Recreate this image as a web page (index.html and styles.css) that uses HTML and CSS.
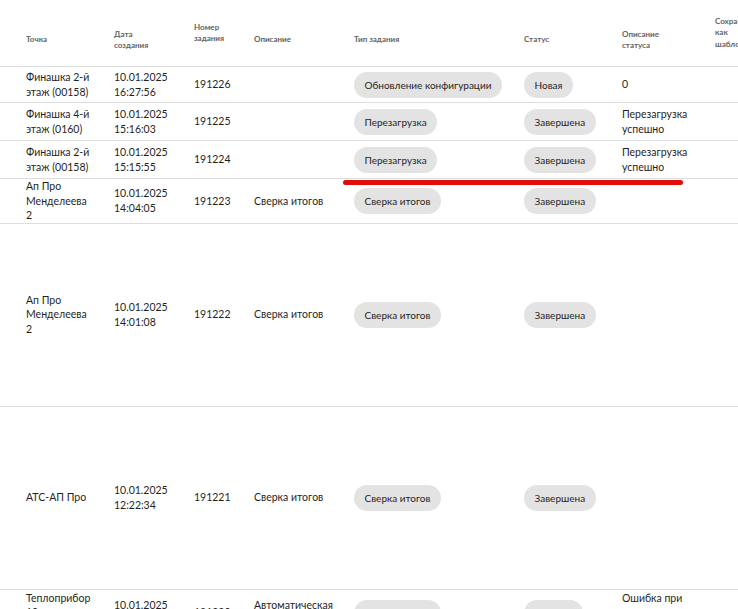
FILE: index.html
```html
<!DOCTYPE html>
<html lang="ru">
<head>
<meta charset="utf-8">
<title>Задания</title>
<link rel="stylesheet" href="styles.css">
</head>
<body>
<div class="wrap">
<table class="tasks">
  <colgroup>
    <col class="c1"><col class="c2"><col class="c3"><col class="c4"><col class="c5"><col class="c6"><col class="c7"><col class="c8">
  </colgroup>
  <thead>
    <tr class="head">
      <th>Точка</th>
      <th>Дата<br>создания</th>
      <th class="up">Номер<br>задания</th>
      <th>Описание</th>
      <th>Тип задания</th>
      <th>Статус</th>
      <th>Описание<br>статуса</th>
      <th class="up">Сохранить<br>как<br>шаблон</th>
    </tr>
  </thead>
  <tbody>
    <tr class="r36">
      <td>Финашка 2-й<br>этаж (00158)</td>
      <td>10.01.2025<br>16:27:56</td>
      <td>191226</td>
      <td></td>
      <td><span class="pill">Обновление конфигурации</span></td>
      <td><span class="pill">Новая</span></td>
      <td>0</td>
      <td></td>
    </tr>
    <tr class="r38">
      <td>Финашка 4-й<br>этаж (0160)</td>
      <td>10.01.2025<br>15:16:03</td>
      <td>191225</td>
      <td></td>
      <td><span class="pill">Перезагрузка</span></td>
      <td><span class="pill">Завершена</span></td>
      <td>Перезагрузка<br>успешно</td>
      <td></td>
    </tr>
    <tr class="r38">
      <td>Финашка 2-й<br>этаж (00158)</td>
      <td>10.01.2025<br>15:15:55</td>
      <td>191224</td>
      <td></td>
      <td><span class="pill">Перезагрузка</span></td>
      <td><span class="pill">Завершена</span></td>
      <td>Перезагрузка<br>успешно</td>
      <td></td>
    </tr>
    <tr class="r43">
      <td>Ап Про<br>Менделеева<br>2</td>
      <td>10.01.2025<br>14:04:05</td>
      <td>191223</td>
      <td>Сверка итогов</td>
      <td><span class="pill">Сверка итогов</span></td>
      <td><span class="pill">Завершена</span></td>
      <td></td>
      <td></td>
    </tr>
    <tr class="r183">
      <td>Ап Про<br>Менделеева<br>2</td>
      <td>10.01.2025<br>14:01:08</td>
      <td>191222</td>
      <td>Сверка итогов</td>
      <td><span class="pill">Сверка итогов</span></td>
      <td><span class="pill">Завершена</span></td>
      <td></td>
      <td></td>
    </tr>
    <tr class="r183">
      <td>АТС-АП Про</td>
      <td>10.01.2025<br>12:22:34</td>
      <td>191221</td>
      <td>Сверка итогов</td>
      <td><span class="pill">Сверка итогов</span></td>
      <td><span class="pill">Завершена</span></td>
      <td></td>
      <td></td>
    </tr>
    <tr class="r46">
      <td>Теплоприбор<br>10<br>лет</td>
      <td>10.01.2025<br>12:10:02</td>
      <td>191220</td>
      <td>Автоматическая<br>сверка</td>
      <td><span class="pill">Сверка итогов</span></td>
      <td><span class="pill">Ошибка</span></td>
      <td>Ошибка при<br>сверке<br>итогов</td>
      <td></td>
    </tr>
  </tbody>
</table>
<div class="mark"></div>
</div>
</body>
</html>
```

FILE: styles.css
```css
html, body {
  margin: 0;
  padding: 0;
  background: #ffffff;
  overflow: hidden;
}
body {
  font-family: Lato, "Noto Sans", sans-serif;
  color: #1f1f1f;
}
.wrap {
  position: relative;
  width: 738px;
  height: 609px;
  overflow: hidden;
}
.tasks {
  border-collapse: collapse;
  table-layout: fixed;
  width: 800px;
}
.c1 { width: 102px; }
.c2 { width: 80px; }
.c3 { width: 60px; }
.c4 { width: 100px; }
.c5 { width: 170px; }
.c6 { width: 98px; }
.c7 { width: 93px; }
.c8 { width: 97px; }
.tasks th,
.tasks td {
  padding: 0 12px;
  text-align: left;
  vertical-align: middle;
}
.tasks th:first-child,
.tasks td:first-child {
  padding-left: 26px;
}
.tasks th {
  height: 52px;
  padding-top: 14px;
  font-size: 8px;
  line-height: 11.5px;
  font-weight: 700;
  color: #636363;
  border-bottom: 1px solid #dedede;
  white-space: nowrap;
}
.tasks th.up {
  height: 66px;
  padding-top: 0;
}
.tasks td {
  font-size: 10.5px;
  line-height: 14.5px;
  border-bottom: 1px solid #dedede;
  white-space: nowrap;
}
.r36 td { height: 35px; }
.r38 td { height: 37px; }
.r43 td { height: 42px; }
.r183 td { height: 182px; }
.r46 td { height: 46px; }
.pill {
  display: inline-block;
  height: 26px;
  line-height: 26px;
  padding: 0 10.5px;
  border-radius: 13px;
  background: #e3e3e3;
  color: #1f1f1f;
  font-size: 10px;
}
.mark {
  position: absolute;
  left: 343px;
  top: 180px;
  width: 340px;
  height: 5px;
  border-radius: 3px;
  background: #e00d0d;
}
```
